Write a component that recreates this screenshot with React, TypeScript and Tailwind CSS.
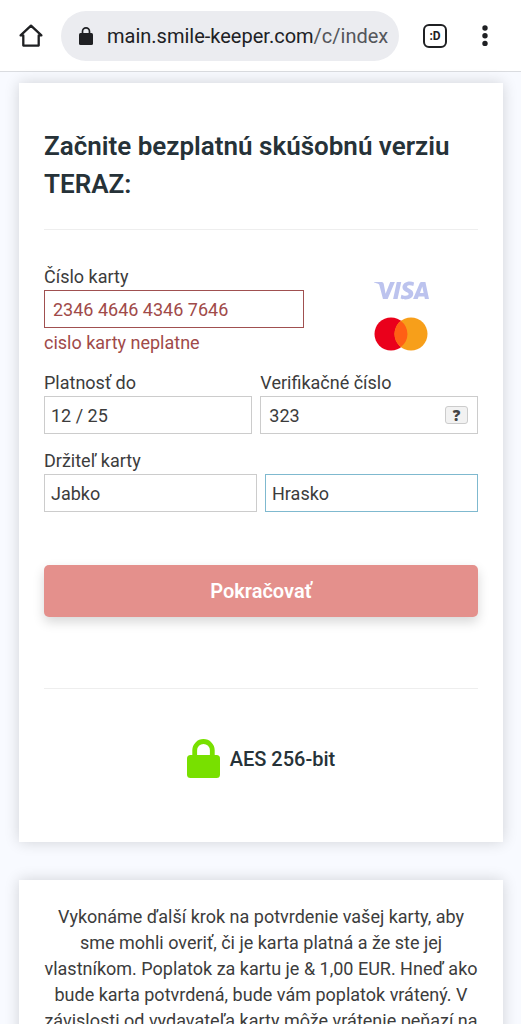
import React, { useState } from "react";
import { SiVisa } from "react-icons/si";

function BrowserBar() {
  return (
    <header className="flex items-center pt-[11px] pb-[10px] pl-[18px] pr-6 bg-white border-b border-[#dadce0]">
      <button type="button" aria-label="Home">
        <svg viewBox="0 0 26 26" className="w-[26px] h-[26px]" fill="none" stroke="#1f2023">
          <path
            d="M13 2.600 2.600 12.400H5.300V22.600H20.700V12.400H23.400Z"
            strokeWidth="2.300"
            strokeLinejoin="round"
          />
        </svg>
      </button>

      <div className="flex flex-1 min-w-0 items-center h-[50px] ml-[17px] pl-[18px] pr-2 gap-[14px] rounded-full bg-[#ebecf0]">
        <svg viewBox="0 0 14 18" className="w-[14px] h-[18px] shrink-0">
          <rect y="6" width="14" height="12" rx="1.500" fill="#1f2023" />
          <path d="M3.500 7V4.400a3.500 3.500 0 0 1 7 0V7" fill="none" stroke="#1f2023" strokeWidth="1.700" />
        </svg>
        <span className="text-[20px] leading-[26px] whitespace-nowrap overflow-hidden text-[#202124]">
          main.smile-keeper.com<span className="text-[#54565b]">/c/index</span>
        </span>
      </div>

      <button
        type="button"
        aria-label="Tabs"
        className="flex items-center justify-center w-6 h-6 ml-6 rounded-md border-2 border-[#1f2023] text-[12px] leading-none font-bold text-[#1f2023]"
      >
        :D
      </button>
      <button type="button" aria-label="Menu" className="ml-[26px]">
        <svg viewBox="0 0 24 24" className="w-6 h-6" fill="#1f2023">
          <circle cx="12" cy="4" r="2.700" />
          <circle cx="12" cy="11.700" r="2.700" />
          <circle cx="12" cy="19.400" r="2.700" />
        </svg>
      </button>
    </header>
  );
}

function CardLogos() {
  return (
    <div className="flex flex-1 flex-col items-center pl-5 pt-4">
      <div className="flex items-center justify-center h-5 overflow-hidden text-[#bcc3ee]">
        <SiVisa className="w-[55px] h-[55px] shrink-0" title="Visa" />
      </div>
      <svg viewBox="0 0 54 34" className="w-[54px] h-[34px] mt-[17px]" role="img" aria-label="Mastercard">
        <circle cx="17" cy="17" r="16.500" fill="#ea001b" />
        <circle cx="37" cy="17" r="16.500" fill="#f79f1a" />
        <path d="M27 3.900a16.500 16.500 0 0 1 0 26.200a16.500 16.500 0 0 1 0-26.200z" fill="#ff5f15" />
      </svg>
    </div>
  );
}

const inputBase = "block w-full h-[38px] border bg-white text-[18px] outline-none";

export default function App() {
  const [cardNumber, setCardNumber] = useState("2346 4646 4346 7646");
  const [expiry, setExpiry] = useState("12 / 25");
  const [code, setCode] = useState("323");
  const [firstName, setFirstName] = useState("Jabko");
  const [lastName, setLastName] = useState("Hrasko");

  return (
    <div className="h-screen overflow-hidden bg-[#f8faff] font-['Roboto',sans-serif] text-[18px] leading-[26px] text-[#3c3c3c]">
      <BrowserBar />

      <main className="flex flex-col gap-[38px] pl-[19px] pr-[18px] pt-[11px]">
        {/* Payment form */}
        <section className="px-[25px] pt-11 pb-[63px] bg-white shadow-[0_0_14px_rgba(0,0,0,0.16)]">
          <h1 className="text-[26px] leading-[38px] font-semibold text-[#263238]">
            Začnite bezplatnú skúšobnú verziu TERAZ:
          </h1>
          <hr className="mt-[26px] border-[#eeeeee]" />

          <form className="mt-[34px]" onSubmit={(e) => e.preventDefault()}>
            <div className="flex">
              <div className="w-3/5">
                <label htmlFor="card-number" className="block">Číslo karty</label>
                <input
                  id="card-number"
                  value={cardNumber}
                  onChange={(e) => setCardNumber(e.target.value)}
                  className={`${inputBase} px-2 border-[#a05050] text-[#a04a49]`}
                />
                <p className="mt-[2px] text-[#a04a49]">cislo karty neplatne</p>
              </div>
              <CardLogos />
            </div>

            <div className="flex gap-2 mt-[14px]">
              <div className="w-[48%]">
                <label htmlFor="expiry" className="block">Platnosť do</label>
                <input
                  id="expiry"
                  value={expiry}
                  onChange={(e) => setExpiry(e.target.value)}
                  className={`${inputBase} px-[6px] border-[#cccccc]`}
                />
              </div>
              <div className="flex-1">
                <label htmlFor="code" className="block">Verifikačné číslo</label>
                <div className="relative">
                  <input
                    id="code"
                    value={code}
                    onChange={(e) => setCode(e.target.value)}
                    className={`${inputBase} px-2 border-[#cccccc]`}
                  />
                  <button
                    type="button"
                    className="absolute right-[10px] top-[10px] w-[23px] h-[18px] rounded-[3px] border border-[#cccccc] bg-[#f2f2f2] font-['Open_Sans',sans-serif] text-[15px] leading-[14px] font-extrabold text-[#444444]"
                  >
                    ?
                  </button>
                </div>
              </div>
            </div>

            <div className="mt-[14px]">
              <label htmlFor="first-name" className="block">Držiteľ karty</label>
              <div className="flex gap-2">
                <input
                  id="first-name"
                  value={firstName}
                  onChange={(e) => setFirstName(e.target.value)}
                  className={`${inputBase} px-[6px] border-[#cccccc]`}
                />
                <input
                  aria-label="Priezvisko"
                  value={lastName}
                  onChange={(e) => setLastName(e.target.value)}
                  className={`${inputBase} px-[6px] border-[#7fb9cf]`}
                />
              </div>
            </div>

            <button
              type="submit"
              className="block w-full h-[52px] mt-[53px] rounded-[5px] bg-[#e4908c] text-[20px] font-semibold text-white shadow-[0_5px_12px_rgba(0,0,0,0.16)]"
            >
              Pokračovať
            </button>
          </form>

          <hr className="mt-[71px] border-[#eeeeee]" />

          <div className="flex items-center justify-center gap-[10px] h-10 mt-[50px]">
            <svg viewBox="0 0 33 40" className="w-[33px] h-10">
              <rect y="16" width="33" height="23" rx="3.500" fill="#78e000" />
              <path d="M7.700 18V11.300a8.800 8.800 0 0 1 17.600 0V18" fill="none" stroke="#78e000" strokeWidth="4.800" />
            </svg>
            <span className="text-[20px] font-medium text-[#263238]">AES 256-bit</span>
          </div>
        </section>

        {/* Card verification notice */}
        <section className="px-[25px] py-6 bg-white shadow-[0_0_14px_rgba(0,0,0,0.16)] text-center">
          <p>
            Vykonáme ďalší krok na potvrdenie vašej karty, aby sme mohli overiť, či je karta platná
            a že ste jej vlastníkom. Poplatok za kartu je &amp; 1,00 EUR. Hneď ako bude karta
            potvrdená, bude vám poplatok vrátený. V závislosti od vydavateľa karty môže vrátenie
            peňazí na
          </p>
        </section>
      </main>
    </div>
  );
}
